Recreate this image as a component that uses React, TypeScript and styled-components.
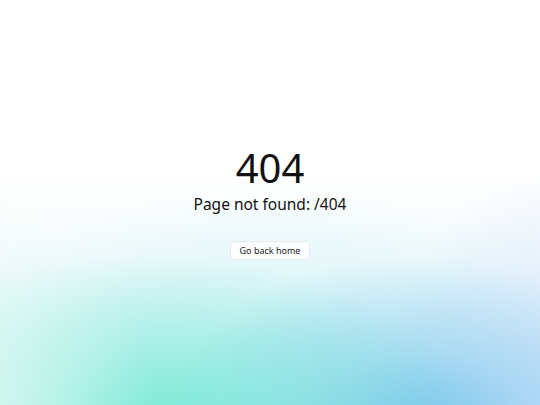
import React from "react";
import styled, { createGlobalStyle } from "styled-components";

const Global = createGlobalStyle`
  html, body { margin: 0; padding: 0; height: 100%; }
  body { font-family: "Noto Sans", "Open Sans", sans-serif; color: #111; }
  #root { height: 100%; }
`;

const Page = styled.main`
  width: 540px;
  height: 405px;
  display: flex;
  flex-direction: column;
  align-items: center;
  justify-content: center;
  background:
    radial-gradient(ellipse 200px 220px at -8% 102%, rgba(225, 250, 242, 0.85), rgba(225, 250, 242, 0) 100%),
    radial-gradient(ellipse 320px 175px at 28% 106%, rgba(118, 234, 212, 1), rgba(118, 234, 212, 0.5) 45%, rgba(118, 234, 212, 0) 100%),
    radial-gradient(ellipse 250px 175px at 77% 106%, rgba(118, 194, 236, 1), rgba(118, 194, 236, 0.45) 45%, rgba(118, 194, 236, 0) 100%),
    radial-gradient(ellipse 180px 230px at 104% 98%, rgba(205, 222, 250, 0.8), rgba(205, 222, 250, 0) 100%),
    radial-gradient(ellipse 440px 260px at 50% 112%, rgba(170, 232, 240, 0.8), rgba(170, 232, 240, 0) 100%),
    linear-gradient(180deg, #ffffff 0%, #ffffff 42%, #f7fcfd 58%, #eef9fa 100%);
`;

const Code = styled.h1`
  margin: 0;
  font-size: 40px;
  font-weight: 400;
  line-height: 1.15;
`;

const Message = styled.p`
  margin: 3px 0 0;
  font-size: 15.5px;
  line-height: 1.3;
`;

const HomeButton = styled.button`
  margin-top: 27px;
  padding: 0 9px;
  height: 19px;
  font-family: inherit;
  font-size: 9px;
  color: #222;
  background: rgba(255, 255, 255, 0.85);
  border: 1px solid #e8eaee;
  border-radius: 4px;
  cursor: pointer;
`;

export default function App() {
  return (
    <>
      <Global />
      <Page>
        <Code>404</Code>
        <Message>Page not found: /404</Message>
        <HomeButton>Go back home</HomeButton>
      </Page>
    </>
  );
}
